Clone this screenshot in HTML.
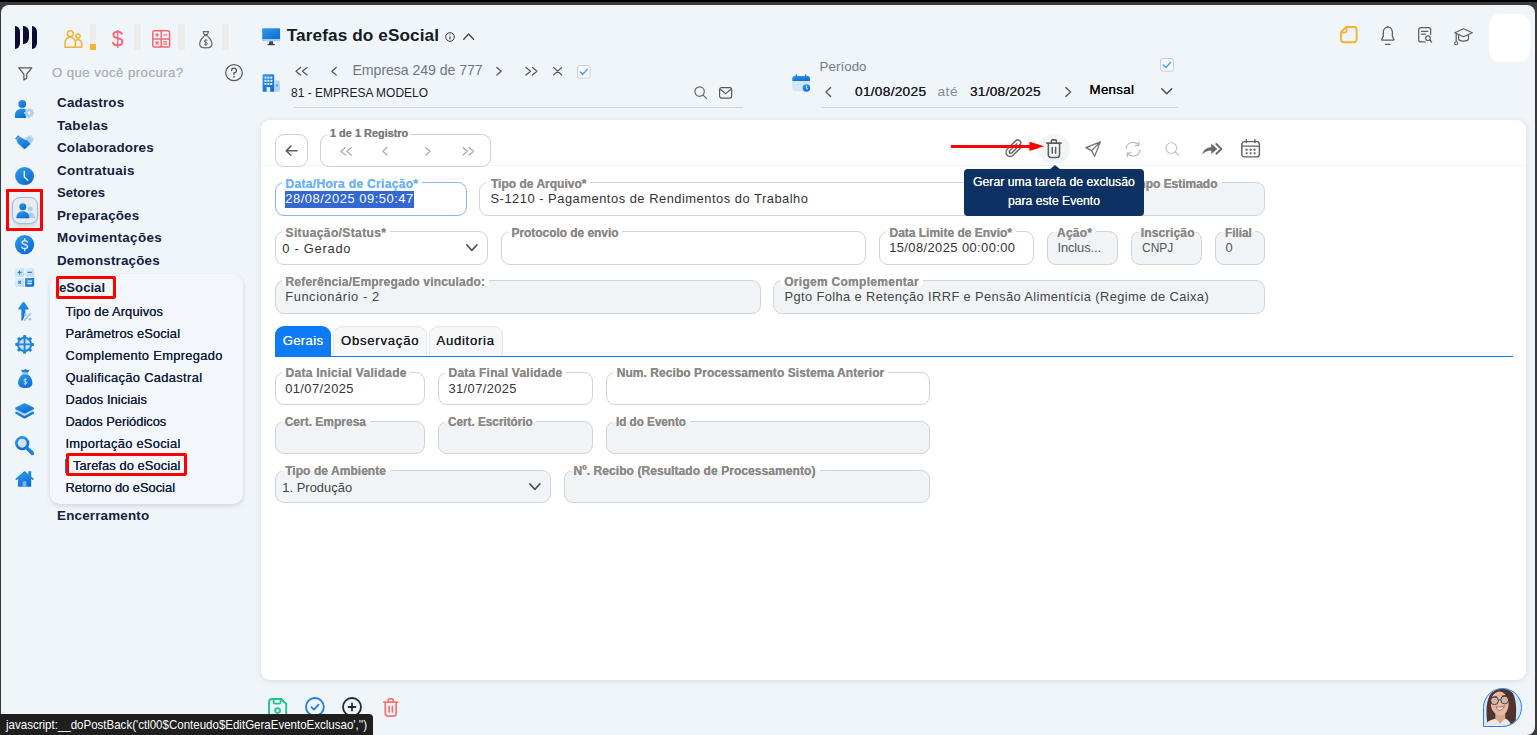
<!DOCTYPE html>
<html lang="pt-BR"><head><meta charset="utf-8"><title>Tarefas do eSocial</title>
<style>
html,body{margin:0;padding:0}
body{width:1537px;height:735px;overflow:hidden;position:relative;background:#3a3a3a;font-family:"Liberation Sans",sans-serif}
.t{position:absolute;white-space:pre;line-height:1}
.ic{position:absolute;display:block}
.ic>svg{display:block;width:100%;height:100%;overflow:visible}
</style></head>
<body>
<svg width="0" height="0" style="position:absolute"><defs><linearGradient id="bg" x1="0" y1="0" x2="0.6" y2="1"><stop offset="0" stop-color="#2d9ce9"/><stop offset="1" stop-color="#0e6dd6"/></linearGradient></defs></svg>
<div style="position:absolute;left:0.00px;top:0.00px;width:1537.00px;height:735.00px;background:#3a3a3a;"></div>
<div style="position:absolute;left:0.00px;top:0.00px;width:1537.00px;height:2.00px;background:#000;"></div>
<div style="position:absolute;left:1.00px;top:5.00px;width:1534.00px;height:730.00px;background:#f0f5fa;border-radius:8px;"></div>
<div style="position:absolute;left:14.90px;top:25.80px;width:5.20px;height:23.10px;background:#0b0a33;border-radius:0 5.2px 5.2px 0 / 0 6px 6px 0;"></div>
<div style="position:absolute;left:23.00px;top:25.80px;width:5.50px;height:17.95px;background:#0b0a33;border-radius:0 5.5px 5.5px 0 / 0 6px 6px 0;"></div>
<div style="position:absolute;left:32.00px;top:25.80px;width:5.00px;height:23.10px;background:#0b0a33;border-radius:0 5px 5px 0 / 0 6px 6px 0;"></div>
<div class="ic" style="left:64.20px;top:29.90px;width:18.60px;height:18.00px;"><svg viewBox="0 0 18.6 18" preserveAspectRatio="none" ><g fill="none" stroke="#fbb130" stroke-width="1.5" stroke-linejoin="round"><circle cx="6.3" cy="3.7" r="2.9"/><path d="M1 17.2 V12.5 A5.2 5.2 0 0 1 11.4 12.5 V17.2 Z"/><circle cx="14" cy="6" r="2.1"/><path d="M11.4 17.2 H17.8 V13.3 A3.7 3.7 0 0 0 11.4 11"/></g></svg></div>
<div style="position:absolute;left:90.10px;top:23.90px;width:6.20px;height:26.10px;background:#ececec;"></div>
<div style="position:absolute;left:90.10px;top:44.00px;width:6.20px;height:6.00px;background:#fbb130;"></div>
<span class="t" style="left:111.70px;top:29px;font-size:21.3px;font-weight:400;color:#fa6373;letter-spacing:0.000px;">$</span>
<div style="position:absolute;left:133.90px;top:23.90px;width:6.90px;height:26.60px;background:#ececec;"></div>
<div class="ic" style="left:152.20px;top:30.00px;width:18.40px;height:17.90px;"><svg viewBox="0 0 18.4 18" preserveAspectRatio="none" ><g fill="none" stroke="#fb6373" stroke-width="1.5"><rect x="0.8" y="0.8" width="16.8" height="16.4" rx="1.6"/><path d="M9.2 0.8 V17.2 M0.8 9 H17.6"/><path d="M3.2 5 H7 M5.1 3.1 V6.9 M11.3 5 H15.1 M3.6 11.6 L6.6 14.6 M6.6 11.6 L3.6 14.6 M11.3 12 H15.1 M11.3 14.3 H15.1" stroke-width="1.2"/></g></svg></div>
<div style="position:absolute;left:178.00px;top:23.90px;width:7.00px;height:26.60px;background:#ececec;"></div>
<div class="ic" style="left:198.90px;top:30.90px;width:13.60px;height:17.50px;"><svg viewBox="0 0 14 17.5" preserveAspectRatio="none" ><g fill="none" stroke="#666" stroke-width="1.25" stroke-linejoin="round"><path d="M4.3 0.7 H9.7 L8.6 3.6 H5.4 Z"/><path d="M5.3 4.6 H8.7"/><path d="M5.2 5.2 C2.5 7.5 0.7 10.5 0.7 13.2 C0.7 15.8 3 16.8 7 16.8 C11 16.8 13.3 15.8 13.3 13.2 C13.3 10.5 11.5 7.5 8.8 5.2"/><path d="M8.6 9.6 C8 8.7 5.5 8.8 5.5 10.2 C5.5 11.8 8.6 11 8.6 12.7 C8.6 14.1 6 14.2 5.4 13.2 M7 7.9 V15" stroke-width="1"/></g></svg></div>
<div style="position:absolute;left:222.00px;top:23.90px;width:7.00px;height:26.60px;background:#ececec;"></div>
<div class="ic" style="left:17.60px;top:66.80px;width:14.60px;height:13.70px;"><svg viewBox="0 0 14.6 13.7" preserveAspectRatio="none" ><path d="M0.8 0.8 H13.8 L8.7 7.2 V11.3 L5.9 12.9 V7.2 Z" fill="none" stroke="#555" stroke-width="1.2" stroke-linejoin="round"/></svg></div>
<span class="t" style="left:51.90px;top:66px;font-size:13.2px;font-weight:400;color:#b0b3b7;letter-spacing:0.452px;text-shadow:0 0 .3px #b0b3b7;">O que você procura?</span>
<div class="ic" style="left:225.00px;top:64.20px;width:18.00px;height:17.30px;"><svg viewBox="0 0 18 17.3" preserveAspectRatio="none" ><ellipse cx="9" cy="8.65" rx="8.3" ry="8" fill="none" stroke="#555" stroke-width="1.2"/><path d="M6.6 6.6 A2.4 2.4 0 1 1 9 9 V10.3" fill="none" stroke="#555" stroke-width="1.3" stroke-linecap="round"/><circle cx="9" cy="12.7" r="0.85" fill="#555"/></svg></div>
<div class="ic" style="left:15.00px;top:100.00px;width:19.20px;height:18.00px;"><svg viewBox="0 0 19.4 18" preserveAspectRatio="none" ><circle cx="7.3" cy="3.9" r="3.9" fill="url(#bg)"/><path d="M0 17.9 V15 C0 11 2.6 8.7 7.3 8.7 C9.6 8.7 11.4 9.3 12.4 10.4 L11 17.9 Z" fill="url(#bg)"/><g fill="#b3d1ee"><circle cx="14.3" cy="12.9" r="3.9"/><path d="M13.3 7.9 h2 v10 h-2z M9.3 11.9 h10 v2 h-10z M10.1 10.1 l1.4 -1.4 7 7 -1.4 1.4z M17.1 8.7 l1.4 1.4 -7 7 -1.4 -1.4z"/></g><circle cx="14.3" cy="12.9" r="1.4" fill="#f4f8fc"/></svg></div>
<div class="ic" style="left:15.00px;top:135.00px;width:19.20px;height:14.50px;"><svg viewBox="0 0 19.4 14.7" preserveAspectRatio="none" ><path d="M19.4 3.7 L15.7 0.2 L12 2.4 L7.5 3.3 L9 6 L15.2 9.6 L17.6 6.6 Z" fill="#a9cbea"/><path d="M19.4 3.7 L15.9 0.2 L14.7 1.5 L18.1 5 Z" fill="#c9dff3"/><path d="M1.8 8.2 L8.8 14.6 L10.4 13.6 L3.4 7 Z" fill="#9cc4ea" opacity=".75"/><path d="M1.6 5.2 L5 1.9 L7.5 3.3 L11.6 4.9 L15.7 9 L9.8 14.4 L4.4 9.4 L2.8 8 Z" fill="url(#bg)"/><path d="M0 3.7 L3.4 0.2 L4.7 1.6 L1.4 4.9 Z" fill="#1f7fdc"/><path d="M7.4 3.4 L10.2 2.6 L12.6 4.2 L10.8 5 Z" fill="#cfe2f5"/></svg></div>
<div class="ic" style="left:15.00px;top:167.00px;width:19.20px;height:18.20px;"><svg viewBox="0 0 19.2 18.2" preserveAspectRatio="none" ><ellipse cx="9.6" cy="9.1" rx="9.5" ry="9" fill="url(#bg)"/><path d="M9.3 4.4 V10 L12.8 13.3" fill="none" stroke="#e9f2fb" stroke-width="1.4" stroke-linecap="round" stroke-linejoin="round"/></svg></div>
<div style="position:absolute;left:6.00px;top:189.00px;width:37.00px;height:42.00px;box-sizing:border-box;border:3px solid #ff0000;border-radius:1px;"></div>
<div style="position:absolute;left:12.00px;top:197.00px;width:26.00px;height:27.00px;box-sizing:border-box;border:1px solid #8fc0f0;border-radius:8px;background:#e9ebee;box-shadow:0 2px 4px rgba(0,0,0,.18);"></div>
<div class="ic" style="left:15.80px;top:202.50px;width:19.20px;height:15.50px;"><svg viewBox="0 0 19.2 15.5" preserveAspectRatio="none" ><circle cx="14.4" cy="5.8" r="2.5" fill="#a9cdf0"/><path d="M10.8 15 C10.8 11.5 12 9.4 14.4 9.4 C17.4 9.4 19 11.8 19 15 Z" fill="#a9cdf0"/><circle cx="6.8" cy="3.7" r="3.5" fill="url(#bg)"/><path d="M0.3 15.3 C0.3 10.6 2.8 8.3 6.8 8.3 C10.8 8.3 13.3 10.6 13.3 15.3 Z" fill="url(#bg)"/></svg></div>
<div class="ic" style="left:15.00px;top:235.00px;width:19.20px;height:19.20px;"><svg viewBox="0 0 19.2 19.2" preserveAspectRatio="none" ><circle cx="9.6" cy="9.6" r="9.6" fill="url(#bg)"/><path d="M12.4 7 C11.9 5.4 7.1 5.1 7.1 7.6 C7.1 10 12.6 9.1 12.6 11.8 C12.6 14.2 7.5 14 6.8 12.2 M9.7 3.6 V5.4 M9.7 13.8 V15.7" fill="none" stroke="#d9e9f8" stroke-width="1.4" stroke-linecap="round"/></svg></div>
<div class="ic" style="left:15.00px;top:268.30px;width:19.20px;height:18.70px;"><svg viewBox="0 0 19.2 18.7" preserveAspectRatio="none" ><defs><linearGradient id="lt" x1="0" y1="0" x2="1" y2="1"><stop offset="0" stop-color="#e6f0fa"/><stop offset="1" stop-color="#b9d6f1"/></linearGradient></defs><path d="M1.6 0 H9.1 V8.8 H0 V1.6 Q0 0 1.6 0 Z" fill="url(#lt)"/><path d="M10.1 0 H17.6 Q19.2 0 19.2 1.6 V8.8 H10.1 Z" fill="url(#lt)"/><path d="M0 9.9 H9.1 V18.7 H1.6 Q0 18.7 0 17.1 Z" fill="url(#lt)"/><path d="M10.1 9.9 H19.2 V17.1 Q19.2 18.7 17.6 18.7 H10.1 Z" fill="url(#bg)"/><path d="M2.6 4.4 H6.6 M4.6 2.4 V6.4 M12.6 4.4 H16.8 M3.3 12.9 L5.9 15.6 M5.9 12.9 L3.3 15.6" stroke="#1f86e0" stroke-width="1.2" fill="none"/><path d="M12.4 13.1 H17 M12.4 15.5 H17" stroke="#e6f0fa" stroke-width="1.3" fill="none"/></svg></div>
<div class="ic" style="left:17.50px;top:302.00px;width:13.30px;height:18.80px;"><svg viewBox="0 0 13.3 18.8" preserveAspectRatio="none" ><path d="M5.4 0 Q6 -0.2 6.6 0.4 L10.6 6.6 Q10.9 7.6 10 7.6 H7.4 V12 L4.6 18.4 H3.4 V7.6 H0.9 Q0 7.6 0.3 6.6 L4.4 0.4 Q4.9 -0.2 5.4 0 Z" fill="url(#bg)"/><path d="M12.6 11.6 L6.6 18.2" stroke="#8fbfea" stroke-width="1.5" fill="none" stroke-linecap="round"/><circle cx="7.3" cy="12.4" r="1.3" fill="#8fbfea"/><circle cx="11.9" cy="17.2" r="1.3" fill="#8fbfea"/></svg></div>
<div class="ic" style="left:15.00px;top:335.00px;width:19.20px;height:18.80px;"><svg viewBox="0 0 19.2 18.8" preserveAspectRatio="none" ><g fill="url(#bg)"><rect x="8.1" y="0" width="3" height="3.4" rx="0.7" transform="rotate(0 9.6 9.4)"/><rect x="8.1" y="0" width="3" height="3.4" rx="0.7" transform="rotate(45 9.6 9.4)"/><rect x="8.1" y="0" width="3" height="3.4" rx="0.7" transform="rotate(90 9.6 9.4)"/><rect x="8.1" y="0" width="3" height="3.4" rx="0.7" transform="rotate(135 9.6 9.4)"/><rect x="8.1" y="0" width="3" height="3.4" rx="0.7" transform="rotate(180 9.6 9.4)"/><rect x="8.1" y="0" width="3" height="3.4" rx="0.7" transform="rotate(225 9.6 9.4)"/><rect x="8.1" y="0" width="3" height="3.4" rx="0.7" transform="rotate(270 9.6 9.4)"/><rect x="8.1" y="0" width="3" height="3.4" rx="0.7" transform="rotate(315 9.6 9.4)"/></g><circle cx="9.6" cy="9.4" r="6.6" fill="#cfe2f5" stroke="#1f86e0" stroke-width="2.1"/><path d="M9.6 3.4 V15.4 M3.6 9.4 H15.6" stroke="#1f86e0" stroke-width="1.9" fill="none"/></svg></div>
<div class="ic" style="left:17.50px;top:368.80px;width:14.50px;height:19.20px;"><svg viewBox="0 0 14.5 19.2" preserveAspectRatio="none" ><path d="M2.6 0.2 L4.6 1.3 L7.2 0.1 L9.9 1.3 L11.9 0.2 L10 3.6 H4.5 Z" fill="url(#bg)"/><path d="M4.4 3.8 H10.1 V5.6 H4.4 Z" fill="#9cc5ec"/><path d="M4.4 5.6 H10.1 C12.8 7.8 14.4 10.9 14.4 14 C14.4 17.4 11.6 19.1 7.25 19.1 C2.9 19.1 0.1 17.4 0.1 14 C0.1 10.9 1.7 7.8 4.4 5.6 Z" fill="url(#bg)"/><path d="M8.8 10.8 C8.3 9.9 5.9 10 5.9 11.4 C5.9 12.9 8.9 12.2 8.9 13.8 C8.9 15.2 6.3 15.3 5.7 14.3 M7.3 9.2 V16.3" fill="none" stroke="#cfe3f6" stroke-width="0.9"/></svg></div>
<div class="ic" style="left:15.00px;top:403.30px;width:19.20px;height:15.90px;"><svg viewBox="0 0 19.2 16" preserveAspectRatio="none" ><path d="M0.4 9 L9.6 5 L18.8 9 Q19.6 10.2 18.6 10.9 L10.6 15.4 Q9.6 15.9 8.6 15.4 L0.6 10.9 Q-0.4 10.2 0.4 9 Z" fill="url(#bg)"/><path d="M0.4 6.6 L9.6 3 L18.8 6.6 Q19.4 7.6 18.6 8.1 L10.6 12.5 Q9.6 13 8.6 12.5 L0.6 8.1 Q-0.2 7.6 0.4 6.6 Z" fill="#c6dcf3"/><path d="M8.6 0.4 Q9.6 -0.1 10.6 0.4 L18.6 4.6 Q19.8 5.4 18.6 6.2 L10.6 10.4 Q9.6 10.9 8.6 10.4 L0.6 6.2 Q-0.6 5.4 0.6 4.6 Z" fill="url(#bg)"/></svg></div>
<div class="ic" style="left:15.00px;top:435.80px;width:19.20px;height:19.20px;"><svg viewBox="0 0 19.2 19.2" preserveAspectRatio="none" ><circle cx="7.2" cy="7.2" r="5.8" fill="#cfe2f5" stroke="url(#bg)" stroke-width="2.7"/><path d="M12.2 12.2 L17.4 17.4" stroke="#1a80e0" stroke-width="3.6" stroke-linecap="round" fill="none"/><path d="M3.9 7.6 A3.4 3.4 0 0 1 5.6 4.4" stroke="#fff" stroke-width="1" fill="none" stroke-linecap="round"/></svg></div>
<div class="ic" style="left:15.00px;top:470.80px;width:19.20px;height:15.90px;"><svg viewBox="0 0 19.2 16" preserveAspectRatio="none" ><rect x="13.4" y="0.2" width="2.8" height="6" fill="#1f86e0"/><path d="M3 7.6 L9.6 2 L16.2 7.6 V15.9 H3 Z" fill="url(#bg)"/><path d="M0.2 8 L9.6 0.1 L19 8 L17.8 9.4 L9.6 2.6 L1.4 9.4 Z" fill="#1f86e0"/><path d="M7.6 15.9 V11.6 Q7.6 10.4 8.8 10.4 H10.2 Q11.4 10.4 11.4 11.6 V15.9 Z" fill="#7db6ea"/></svg></div>
<span class="t" style="left:57.00px;top:96px;font-size:13.4px;font-weight:700;color:#14213d;letter-spacing:0.213px;">Cadastros</span>
<span class="t" style="left:57.00px;top:119px;font-size:13.4px;font-weight:700;color:#14213d;letter-spacing:0.354px;">Tabelas</span>
<span class="t" style="left:57.00px;top:141px;font-size:13.4px;font-weight:700;color:#14213d;letter-spacing:0.183px;">Colaboradores</span>
<span class="t" style="left:57.00px;top:164px;font-size:13.4px;font-weight:700;color:#14213d;letter-spacing:0.309px;">Contratuais</span>
<span class="t" style="left:57.00px;top:186px;font-size:13.4px;font-weight:700;color:#14213d;letter-spacing:0.000px;transform:scaleX(0.9771);transform-origin:0 0;">Setores</span>
<span class="t" style="left:57.00px;top:209px;font-size:13.4px;font-weight:700;color:#14213d;letter-spacing:0.179px;">Preparações</span>
<span class="t" style="left:57.00px;top:231px;font-size:13.4px;font-weight:700;color:#14213d;letter-spacing:0.353px;">Movimentações</span>
<span class="t" style="left:57.00px;top:254px;font-size:13.4px;font-weight:700;color:#14213d;letter-spacing:0.185px;">Demonstrações</span>
<div style="position:absolute;left:50.00px;top:274.20px;width:193.30px;height:229.50px;background:#f3f7fb;border-radius:10px;box-shadow:0 2px 5px rgba(0,0,0,.13);"></div>
<div style="position:absolute;left:56.20px;top:276.20px;width:60.00px;height:22.60px;box-sizing:border-box;border:3px solid #ff0000;border-radius:2px;"></div>
<span class="t" style="left:59.20px;top:281px;font-size:13.4px;font-weight:700;color:#14213d;letter-spacing:0.000px;transform:scaleX(0.9828);transform-origin:0 0;">eSocial</span>
<span class="t" style="left:65.50px;top:306px;font-size:12.9px;font-weight:400;color:#14213d;letter-spacing:0.130px;text-shadow:0 0 .4px #14213d;">Tipo de Arquivos</span>
<span class="t" style="left:65.50px;top:328px;font-size:12.9px;font-weight:400;color:#14213d;letter-spacing:0.118px;text-shadow:0 0 .4px #14213d;">Parâmetros eSocial</span>
<span class="t" style="left:65.50px;top:350px;font-size:12.9px;font-weight:400;color:#14213d;letter-spacing:0.326px;text-shadow:0 0 .4px #14213d;">Complemento Empregado</span>
<span class="t" style="left:65.50px;top:372px;font-size:12.9px;font-weight:400;color:#14213d;letter-spacing:0.324px;text-shadow:0 0 .4px #14213d;">Qualificação Cadastral</span>
<span class="t" style="left:65.50px;top:394px;font-size:12.9px;font-weight:400;color:#14213d;letter-spacing:0.096px;text-shadow:0 0 .4px #14213d;">Dados Iniciais</span>
<span class="t" style="left:65.50px;top:416px;font-size:12.9px;font-weight:400;color:#14213d;letter-spacing:-0.015px;text-shadow:0 0 .4px #14213d;">Dados Periódicos</span>
<span class="t" style="left:65.50px;top:438px;font-size:12.9px;font-weight:400;color:#14213d;letter-spacing:0.261px;text-shadow:0 0 .4px #14213d;">Importação eSocial</span>
<span class="t" style="left:73.00px;top:460px;font-size:12.9px;font-weight:400;color:#14213d;letter-spacing:0.073px;text-shadow:0 0 .4px #14213d;">Tarefas do eSocial</span>
<span class="t" style="left:65.50px;top:482px;font-size:12.9px;font-weight:400;color:#14213d;letter-spacing:-0.008px;text-shadow:0 0 .4px #14213d;">Retorno do eSocial</span>
<div style="position:absolute;left:64.50px;top:459.00px;width:2.50px;height:14.00px;background:#1a73e8;"></div>
<div style="position:absolute;left:66.20px;top:453.00px;width:120.80px;height:23.20px;box-sizing:border-box;border:3px solid #ff0000;border-radius:2px;"></div>
<span class="t" style="left:57.00px;top:509px;font-size:13.4px;font-weight:700;color:#14213d;letter-spacing:0.196px;">Encerramento</span>
<div class="ic" style="left:262.00px;top:28.30px;width:18.30px;height:17.70px;"><svg viewBox="0 0 18.3 17.7" preserveAspectRatio="none" ><rect x="0.2" y="0.2" width="17.9" height="12.8" rx="1" fill="url(#bg)"/><rect x="0.2" y="11" width="17.9" height="2.2" fill="#a9cdf0"/><path d="M7.4 13.2 H10.9 L11.4 16 H6.9 Z" fill="#3a4657"/><rect x="5.4" y="16" width="7.5" height="1.2" rx="0.5" fill="#3a4657"/></svg></div>
<span class="t" style="left:286.80px;top:27px;font-size:17.2px;font-weight:700;color:#151a24;letter-spacing:0.094px;">Tarefas do eSocial</span>
<div class="ic" style="left:444.70px;top:31.50px;width:10.00px;height:10.00px;"><svg viewBox="0 0 10 10" preserveAspectRatio="none" ><circle cx="5" cy="5" r="4.3" fill="none" stroke="#222" stroke-width="0.9"/><path d="M5 4.4 V7.3 M5 2.6 V3.3" stroke="#222" stroke-width="1" fill="none"/></svg></div>
<div class="ic" style="left:462.70px;top:32.70px;width:11.30px;height:7.00px;"><svg viewBox="0 0 12 7" preserveAspectRatio="none" ><path d="M0.8 6.2 L6 1 L11.2 6.2" fill="none" stroke="#444" stroke-width="1.5" stroke-linecap="round" stroke-linejoin="round"/></svg></div>
<div class="ic" style="left:262.00px;top:74.00px;width:18.30px;height:18.00px;"><svg viewBox="0 0 18.3 18" preserveAspectRatio="none" ><path d="M0.6 1.6 Q0.6 0.3 1.9 0.3 H10.9 Q12.2 0.3 12.2 1.6 V17.8 H0.6 Z" fill="url(#bg)"/><path d="M12.2 6.4 H16.6 Q17.9 6.4 17.9 7.7 V16.5 Q17.9 17.8 16.6 17.8 H12.2 Z" fill="#b4d3f1"/><g fill="#eaf3fc"><rect x="2.5" y="2.6" width="2" height="2"/><rect x="5.4" y="2.6" width="2" height="2"/><rect x="8.3" y="2.6" width="2" height="2"/><rect x="2.5" y="5.8" width="2" height="2"/><rect x="5.4" y="5.8" width="2" height="2"/><rect x="8.3" y="5.8" width="2" height="2"/><rect x="2.5" y="9" width="2" height="2"/><rect x="5.4" y="9" width="2" height="2"/><rect x="8.3" y="9" width="2" height="2"/><rect x="4.6" y="13" width="3.6" height="4.8"/></g><rect x="14.4" y="10.6" width="1.4" height="2" fill="#1f86e0"/></svg></div>
<div class="ic" style="left:294.70px;top:67.00px;width:13.00px;height:8.50px;color:#555;"><svg viewBox="0 0 13 8.5" preserveAspectRatio="none" ><path d="M5.6 0.5 L1 4.25 L5.6 8 M12 0.5 L7.4 4.25 L12 8" fill="none" stroke="currentColor" stroke-width="1.2" stroke-linecap="round" stroke-linejoin="round"/></svg></div>
<div class="ic" style="left:330.50px;top:67.00px;width:6.00px;height:8.50px;color:#555;"><svg viewBox="0 0 6 8.5" preserveAspectRatio="none" ><path d="M5.2 0.5 L0.8 4.25 L5.2 8" fill="none" stroke="currentColor" stroke-width="1.2" stroke-linecap="round" stroke-linejoin="round"/></svg></div>
<span class="t" style="left:352.50px;top:63px;font-size:14.2px;font-weight:400;color:#707782;letter-spacing:-0.090px;">Empresa 249 de 777</span>
<div class="ic" style="left:496.00px;top:67.00px;width:6.00px;height:8.50px;color:#555;"><svg viewBox="0 0 6 8.5" preserveAspectRatio="none" ><path d="M0.8 0.5 L5.2 4.25 L0.8 8" fill="none" stroke="currentColor" stroke-width="1.2" stroke-linecap="round" stroke-linejoin="round"/></svg></div>
<div class="ic" style="left:525.00px;top:67.00px;width:13.00px;height:8.50px;color:#555;"><svg viewBox="0 0 13 8.5" preserveAspectRatio="none" ><path d="M1 0.5 L5.6 4.25 L1 8 M7.4 0.5 L12 4.25 L7.4 8" fill="none" stroke="currentColor" stroke-width="1.2" stroke-linecap="round" stroke-linejoin="round"/></svg></div>
<div class="ic" style="left:552.70px;top:67.00px;width:9.30px;height:8.50px;color:#555;"><svg viewBox="0 0 9 9" preserveAspectRatio="none" ><path d="M0.7 0.7 L8.3 8.3 M8.3 0.7 L0.7 8.3" fill="none" stroke="currentColor" stroke-width="1.3" stroke-linecap="round"/></svg></div>
<div class="ic" style="left:576.70px;top:65.00px;width:13.50px;height:13.70px;"><svg viewBox="0 0 14 14" preserveAspectRatio="none" ><rect x="0.5" y="0.5" width="13" height="13" rx="2.2" fill="#f5f8fc" stroke="#c9ced6" stroke-width="1"/><path d="M3.4 7.2 L6 9.7 L10.7 4.4" fill="none" stroke="#56a3ee" stroke-width="1.6" stroke-linecap="round" stroke-linejoin="round"/></svg></div>
<span class="t" style="left:291.00px;top:86px;font-size:13.3px;font-weight:400;color:#1d2026;letter-spacing:0.000px;transform:scaleX(0.8999);transform-origin:0 0;">81 - EMPRESA MODELO</span>
<div class="ic" style="left:693.70px;top:85.70px;width:13.30px;height:13.30px;color:#666;"><svg viewBox="0 0 13.3 13.3" preserveAspectRatio="none" ><circle cx="5.6" cy="5.6" r="4.7" fill="none" stroke="currentColor" stroke-width="1.2"/><path d="M9.1 9.1 L12.6 12.6" stroke="currentColor" stroke-width="1.3" stroke-linecap="round" fill="none"/></svg></div>
<div class="ic" style="left:718.70px;top:86.50px;width:13.30px;height:11.70px;color:#555;"><svg viewBox="0 0 13.3 11.7" preserveAspectRatio="none" ><rect x="0.6" y="0.6" width="12.1" height="10.5" rx="2" fill="none" stroke="currentColor" stroke-width="1.15"/><path d="M1.2 2.2 L6.65 6.6 L12.1 2.2" fill="none" stroke="currentColor" stroke-width="1.15" stroke-linejoin="round"/></svg></div>
<div style="position:absolute;left:293.50px;top:106.80px;width:449.00px;height:1.00px;background:#cfd4da;"></div>
<div class="ic" style="left:791.70px;top:74.00px;width:18.30px;height:18.00px;"><svg viewBox="0 0 18.3 18" preserveAspectRatio="none" ><rect x="0.3" y="2" width="17.6" height="15" rx="2.4" fill="#d3e5f7"/><path d="M0.3 7 V4.4 Q0.3 2 2.7 2 H15.5 Q17.9 2 17.9 4.4 V7 Z" fill="url(#bg)"/><rect x="3.6" y="0.2" width="1.5" height="3.4" rx="0.7" fill="#1f86e0"/><rect x="13" y="0.2" width="1.5" height="3.4" rx="0.7" fill="#1f86e0"/><circle cx="14.4" cy="14" r="3.8" fill="url(#bg)"/><path d="M14.4 12 V14.2 L15.7 15" stroke="#fff" stroke-width="0.9" fill="none" stroke-linecap="round"/></svg></div>
<span class="t" style="left:819.50px;top:60px;font-size:13.3px;font-weight:400;color:#777b82;letter-spacing:0.070px;">Período</span>
<div class="ic" style="left:824.50px;top:87.00px;width:6.50px;height:10.00px;color:#5a5a5a;"><svg viewBox="0 0 6 8.5" preserveAspectRatio="none" ><path d="M5.2 0.5 L0.8 4.25 L5.2 8" fill="none" stroke="currentColor" stroke-width="1.2" stroke-linecap="round" stroke-linejoin="round"/></svg></div>
<span class="t" style="left:855.00px;top:85px;font-size:13.7px;font-weight:400;color:#1d2026;letter-spacing:0.276px;text-shadow:0 0 .25px #1d2026;">01/08/2025</span>
<span class="t" style="left:937.50px;top:85px;font-size:13.7px;font-weight:400;color:#858a91;letter-spacing:0.484px;">até</span>
<span class="t" style="left:970.00px;top:85px;font-size:13.7px;font-weight:400;color:#1d2026;letter-spacing:0.243px;text-shadow:0 0 .25px #1d2026;">31/08/2025</span>
<div class="ic" style="left:1064.50px;top:87.00px;width:6.50px;height:10.00px;color:#5a5a5a;"><svg viewBox="0 0 6 8.5" preserveAspectRatio="none" ><path d="M0.8 0.5 L5.2 4.25 L0.8 8" fill="none" stroke="currentColor" stroke-width="1.2" stroke-linecap="round" stroke-linejoin="round"/></svg></div>
<span class="t" style="left:1089.50px;top:83px;font-size:13.3px;font-weight:400;color:#000;letter-spacing:0.325px;text-shadow:0 0 .35px #000;">Mensal</span>
<div class="ic" style="left:1160.50px;top:87.50px;width:11.50px;height:6.70px;"><svg viewBox="0 0 12 7" preserveAspectRatio="none" ><path d="M0.8 0.8 L6 6 L11.2 0.8" fill="none" stroke="#4a4a4a" stroke-width="1.5" stroke-linecap="round" stroke-linejoin="round"/></svg></div>
<div class="ic" style="left:1159.70px;top:58.00px;width:14.00px;height:13.70px;"><svg viewBox="0 0 14 14" preserveAspectRatio="none" ><rect x="0.5" y="0.5" width="13" height="13" rx="2.2" fill="#f5f8fc" stroke="#c9ced6" stroke-width="1"/><path d="M3.4 7.2 L6 9.7 L10.7 4.4" fill="none" stroke="#56a3ee" stroke-width="1.6" stroke-linecap="round" stroke-linejoin="round"/></svg></div>
<div style="position:absolute;left:820.70px;top:106.80px;width:357.30px;height:1.00px;background:#cfd4da;"></div>
<div class="ic" style="left:1340.30px;top:26.20px;width:17.60px;height:17.30px;"><svg viewBox="0 0 17.6 17.3" preserveAspectRatio="none" ><path d="M6.2 1 H13.6 Q16.6 1 16.6 4 V13.3 Q16.6 16.3 13.6 16.3 H4 Q1 16.3 1 13.3 V6.2 Z" fill="none" stroke="#fbb130" stroke-width="1.9" stroke-linejoin="round"/><path d="M6.6 1.2 V4.4 Q6.6 6.6 4.4 6.6 H1.2" fill="none" stroke="#fbb130" stroke-width="1.7"/></svg></div>
<div class="ic" style="left:1380.60px;top:25.60px;width:13.70px;height:19.40px;"><svg viewBox="0 0 13.7 19.4" preserveAspectRatio="none" ><path d="M6.85 1.2 C3.8 1.2 2.3 3.6 2.3 6.6 V10.2 L0.8 13.4 Q0.6 14.2 1.5 14.2 H12.2 Q13.1 14.2 12.9 13.4 L11.4 10.2 V6.6 C11.4 3.6 9.9 1.2 6.85 1.2 Z" fill="none" stroke="#5e5e5e" stroke-width="1.3" stroke-linejoin="round"/><path d="M6.85 0.3 V1.2 M4.6 18.3 H9.1" stroke="#5e5e5e" stroke-width="1.3" stroke-linecap="round" fill="none"/></svg></div>
<div class="ic" style="left:1417.60px;top:27.00px;width:14.40px;height:16.20px;"><svg viewBox="0 0 14.4 16.2" preserveAspectRatio="none" ><path d="M7.2 15 H3 Q0.7 15 0.7 12.7 V3 Q0.7 0.7 3 0.7 H10.4 Q12.7 0.7 12.7 3 V7.4" fill="none" stroke="#5e5e5e" stroke-width="1.25" stroke-linecap="round"/><path d="M3.6 4.4 H9.8 M3.6 7.2 H7.4" stroke="#5e5e5e" stroke-width="1.2" stroke-linecap="round" fill="none"/><circle cx="10" cy="11.2" r="2.3" fill="none" stroke="#5e5e5e" stroke-width="1.2"/><path d="M11.8 13 L13.6 15" stroke="#5e5e5e" stroke-width="1.3" stroke-linecap="round"/></svg></div>
<div class="ic" style="left:1454.20px;top:27.60px;width:19.10px;height:17.40px;"><svg viewBox="0 0 19.1 17.4" preserveAspectRatio="none" ><path d="M9.55 0.7 L18.3 4.7 L9.55 8.7 L0.8 4.7 Z" fill="none" stroke="#5e5e5e" stroke-width="1.25" stroke-linejoin="round"/><path d="M4.6 6.6 V10.6 C4.6 12.2 6.8 13.2 9.55 13.2 C12.3 13.2 14.5 12.2 14.5 10.6 V6.6" fill="none" stroke="#5e5e5e" stroke-width="1.25"/><path d="M2.2 5.4 V13.6" stroke="#5e5e5e" stroke-width="1.25" fill="none"/><circle cx="2.2" cy="15.2" r="1.5" fill="none" stroke="#5e5e5e" stroke-width="1.1"/></svg></div>
<div style="position:absolute;left:1489.00px;top:13.80px;width:41.00px;height:48.20px;background:#fff;border-radius:11px;"></div>
<div style="position:absolute;left:261.00px;top:120.00px;width:1264.50px;height:560.00px;background:#fff;border-radius:9px;box-shadow:0 1px 6px rgba(0,0,0,.11);"></div>
<div style="position:absolute;left:261.00px;top:165.30px;width:1264.50px;height:1.00px;background:#f3f4f6;"></div>
<div style="position:absolute;left:275px;top:134px;width:33px;height:33px;box-sizing:border-box;border:1px solid #c9d1da;border-radius:9px;background:#fff;"></div>
<div class="ic" style="left:284.50px;top:145.20px;width:13.00px;height:11.40px;color:#5e5e5e;"><svg viewBox="0 0 14 12" preserveAspectRatio="none" ><path d="M13 6 H1.5 M6.3 1.2 L1.3 6 L6.3 10.8" fill="none" stroke="currentColor" stroke-width="1.6" stroke-linecap="round" stroke-linejoin="round"/></svg></div>
<div style="position:absolute;left:320px;top:134px;width:171px;height:33px;box-sizing:border-box;border:1px solid #cfcfcf;border-radius:9px;background:#fff;"></div>
<div style="position:absolute;left:327.00px;top:134.00px;width:83.50px;height:1.20px;background:#fff;"></div>
<span class="t" style="left:329.70px;top:127px;font-size:11.6px;font-weight:700;color:#7d7b7a;letter-spacing:0.000px;transform:scaleX(0.9420);transform-origin:0 0;text-shadow:0 0 .35px #7d7b7a;">1 de 1 Registro</span>
<div class="ic" style="left:339.70px;top:147.30px;width:12.30px;height:8.50px;color:#a9a9a9;"><svg viewBox="0 0 13 8.5" preserveAspectRatio="none" ><path d="M5.6 0.5 L1 4.25 L5.6 8 M12 0.5 L7.4 4.25 L12 8" fill="none" stroke="currentColor" stroke-width="1.2" stroke-linecap="round" stroke-linejoin="round"/></svg></div>
<div class="ic" style="left:382.30px;top:147.30px;width:5.70px;height:8.50px;color:#a9a9a9;"><svg viewBox="0 0 6 8.5" preserveAspectRatio="none" ><path d="M5.2 0.5 L0.8 4.25 L5.2 8" fill="none" stroke="currentColor" stroke-width="1.2" stroke-linecap="round" stroke-linejoin="round"/></svg></div>
<div class="ic" style="left:425.30px;top:147.30px;width:6.00px;height:8.50px;color:#a9a9a9;"><svg viewBox="0 0 6 8.5" preserveAspectRatio="none" ><path d="M0.8 0.5 L5.2 4.25 L0.8 8" fill="none" stroke="currentColor" stroke-width="1.2" stroke-linecap="round" stroke-linejoin="round"/></svg></div>
<div class="ic" style="left:461.50px;top:147.30px;width:12.50px;height:8.50px;color:#a9a9a9;"><svg viewBox="0 0 13 8.5" preserveAspectRatio="none" ><path d="M1 0.5 L5.6 4.25 L1 8 M7.4 0.5 L12 4.25 L7.4 8" fill="none" stroke="currentColor" stroke-width="1.2" stroke-linecap="round" stroke-linejoin="round"/></svg></div>
<div style="position:absolute;left:951.00px;top:144.70px;width:81.00px;height:3.20px;background:#ff0000;"></div>
<svg class="ic" style="left:1029px;top:140px;width:17px;height:13px" viewBox="0 0 17 13"><path d="M0.6 1.9 L15.2 6.3 L0.6 10.7 Z" fill="#ff0000"/></svg>
<div style="position:absolute;left:1037.80px;top:134.00px;width:32.20px;height:30.00px;background:#f2f4f5;border-radius:50%;"></div>
<div class="ic" style="left:1004.50px;top:138.70px;width:18.00px;height:18.80px;color:#6b6b6b;"><svg viewBox="0 0 18 18.8" preserveAspectRatio="none" ><path d="M16.2 8.2 L8.4 16 C6.6 17.8 3.8 17.8 2.2 16.2 C0.6 14.6 0.6 11.8 2.4 10 L10.6 1.9 C11.8 0.7 13.7 0.7 14.8 1.8 C15.9 2.9 15.9 4.8 14.7 6 L6.8 13.9 C6.2 14.5 5.3 14.5 4.7 13.9 C4.1 13.3 4.1 12.4 4.7 11.8 L11.8 4.7" fill="none" stroke="currentColor" stroke-width="1.55" stroke-linecap="round" stroke-linejoin="round"/></svg></div>
<svg class="ic" style="left:1029px;top:140px;width:17px;height:13px" viewBox="0 0 17 13"><path d="M0.6 1.9 L15.2 6.3 L0.6 10.7 Z" fill="#ff0000"/></svg>
<div style="position:absolute;left:1000.00px;top:144.70px;width:32.00px;height:3.20px;background:#ff0000;"></div>
<div class="ic" style="left:1046.00px;top:139.00px;width:15.90px;height:19.40px;color:#5c5c5c;"><svg viewBox="0 0 15.7 18.3" preserveAspectRatio="none" ><path d="M0.8 3.9 H14.9 M5.3 3.6 V2.3 Q5.3 0.8 6.8 0.8 H8.9 Q10.4 0.8 10.4 2.3 V3.6" fill="none" stroke="currentColor" stroke-width="1.5" stroke-linecap="round"/><path d="M2.3 4.2 V14.6 Q2.3 17.4 5.1 17.4 H10.6 Q13.4 17.4 13.4 14.6 V4.2" fill="none" stroke="currentColor" stroke-width="1.5"/><path d="M6.2 8 V13.4 M9.5 8 V13.4" stroke="currentColor" stroke-width="1.5" stroke-linecap="round" fill="none"/></svg></div>
<div class="ic" style="left:1085.00px;top:140.50px;width:16.20px;height:16.20px;color:#707070;"><svg viewBox="0 0 16.2 16.2" preserveAspectRatio="none" ><path d="M15.4 0.8 L0.9 6.6 L6.6 9.6 L9.6 15.3 Z M6.6 9.6 L15.4 0.8" fill="none" stroke="currentColor" stroke-width="1.25" stroke-linejoin="round" stroke-linecap="round"/></svg></div>
<div class="ic" style="left:1124.50px;top:140.50px;width:16.20px;height:16.50px;color:#bdbdbd;"><svg viewBox="0 0 16.2 16.5" preserveAspectRatio="none" ><path d="M1.2 7.4 C1.6 3.8 4.6 1.4 8.1 1.4 C10.6 1.4 12.6 2.6 13.9 4.4 M13.9 0.8 V4.6 H10.2 M15 9.1 C14.6 12.7 11.6 15.1 8.1 15.1 C5.6 15.1 3.6 13.9 2.3 12.1 M2.3 15.7 V11.9 H6" fill="none" stroke="currentColor" stroke-width="1.3" stroke-linecap="round" stroke-linejoin="round"/></svg></div>
<div class="ic" style="left:1164.50px;top:141.80px;width:14.20px;height:13.90px;color:#c2c2c2;"><svg viewBox="0 0 14.2 13.9" preserveAspectRatio="none" ><circle cx="6.3" cy="6.1" r="5.4" fill="none" stroke="currentColor" stroke-width="1.1"/><path d="M10.3 10 L13.7 13.4" stroke="currentColor" stroke-width="1.2" stroke-linecap="round" fill="none"/></svg></div>
<div class="ic" style="left:1201.60px;top:143.00px;width:20.30px;height:11.90px;color:#6a6a6a;"><svg viewBox="0 0 20.7 12" preserveAspectRatio="none" ><path d="M0.3 11.6 C1.6 7 4.6 4.6 9.4 4.4 V0.6 L15.6 6 L9.4 11 V7.6 C5.6 7.6 2.6 8.8 0.3 11.6 Z" fill="currentColor"/><path d="M14.6 1 L19.8 6 L14.6 10.8" fill="none" stroke="currentColor" stroke-width="1.9" stroke-linejoin="round" stroke-linecap="round"/></svg></div>
<div class="ic" style="left:1240.80px;top:139.00px;width:19.20px;height:18.80px;color:#616161;"><svg viewBox="0 0 19 18.5" preserveAspectRatio="none" ><rect x="0.8" y="2.6" width="17.4" height="15" rx="2.6" fill="none" stroke="currentColor" stroke-width="1.4"/><path d="M0.8 7 H18.2 M5.2 0.8 V3.6 M13.8 0.8 V3.6" stroke="currentColor" stroke-width="1.4" stroke-linecap="round" fill="none"/><g fill="currentColor"><rect x="4.6" y="9.6" width="1.9" height="1.9" rx="0.4"/><rect x="8.55" y="9.6" width="1.9" height="1.9" rx="0.4"/><rect x="12.5" y="9.6" width="1.9" height="1.9" rx="0.4"/><rect x="4.6" y="13" width="1.9" height="1.9" rx="0.4"/><rect x="8.55" y="13" width="1.9" height="1.9" rx="0.4"/><rect x="12.5" y="13" width="1.9" height="1.9" rx="0.4"/></g></svg></div>
<div style="position:absolute;left:275px;top:182px;width:192px;height:34px;box-sizing:border-box;border:1px solid #86b7fe;border-radius:9px;background:#fff;"></div>
<div style="position:absolute;left:282.00px;top:182.00px;width:140.00px;height:1.00px;background:#fff;"></div>
<span class="t" style="left:285.50px;top:178px;font-size:12px;font-weight:700;color:#6cb2f7;letter-spacing:0.323px;text-shadow:0 0 .35px #6cb2f7;">Data/Hora de Criação*</span>
<div style="position:absolute;left:284.80px;top:190.50px;width:129.10px;height:17.00px;background:#3367d1;"></div>
<span class="t" style="left:285.30px;top:193px;font-size:12.9px;font-weight:400;color:#fff;letter-spacing:0.534px;">28/08/2025 09:50:47</span>
<div style="position:absolute;left:479px;top:182px;width:621px;height:34px;box-sizing:border-box;border:1px solid #ced4da;border-radius:9px;background:#fff;"></div>
<div style="position:absolute;left:487.00px;top:182.00px;width:103.00px;height:1.00px;background:#fff;"></div>
<span class="t" style="left:491.00px;top:178px;font-size:12px;font-weight:700;color:#8b8886;letter-spacing:0.010px;text-shadow:0 0 .35px #8b8886;">Tipo de Arquivo*</span>
<span class="t" style="left:490.50px;top:193px;font-size:12.9px;font-weight:400;color:#333;letter-spacing:0.510px;">S-1210 - Pagamentos de Rendimentos do Trabalho</span>
<div style="position:absolute;left:1112px;top:182px;width:153px;height:34px;box-sizing:border-box;border:1px solid #ced4da;border-radius:9px;background:#f1f4f7;"></div>
<div style="position:absolute;left:1118.00px;top:182.00px;width:104.00px;height:1.00px;background:#fff;"></div>
<span class="t" style="left:1122.00px;top:178px;font-size:12px;font-weight:700;color:#8b8886;letter-spacing:-0.023px;text-shadow:0 0 .35px #8b8886;">Tempo Estimado</span>
<div style="position:absolute;left:275px;top:231px;width:213px;height:34px;box-sizing:border-box;border:1px solid #ced4da;border-radius:9px;background:#fff;"></div>
<div style="position:absolute;left:282.00px;top:231.00px;width:108.00px;height:1.00px;background:#fff;"></div>
<span class="t" style="left:285.50px;top:227px;font-size:12px;font-weight:700;color:#8b8886;letter-spacing:0.386px;text-shadow:0 0 .35px #8b8886;">Situação/Status*</span>
<span class="t" style="left:282.20px;top:243px;font-size:12.9px;font-weight:400;color:#333;letter-spacing:0.742px;">0 - Gerado</span>
<div class="ic" style="left:465.50px;top:244.20px;width:11.70px;height:7.40px;"><svg viewBox="0 0 12 7" preserveAspectRatio="none" ><path d="M0.8 0.8 L6 6 L11.2 0.8" fill="none" stroke="#4a4a4a" stroke-width="1.5" stroke-linecap="round" stroke-linejoin="round"/></svg></div>
<div style="position:absolute;left:501px;top:231px;width:365px;height:34px;box-sizing:border-box;border:1px solid #ced4da;border-radius:9px;background:#fff;"></div>
<div style="position:absolute;left:508.00px;top:231.00px;width:114.00px;height:1.00px;background:#fff;"></div>
<span class="t" style="left:511.50px;top:227px;font-size:12px;font-weight:700;color:#8b8886;letter-spacing:-0.060px;text-shadow:0 0 .35px #8b8886;">Protocolo de envio</span>
<div style="position:absolute;left:879px;top:231px;width:155px;height:34px;box-sizing:border-box;border:1px solid #ced4da;border-radius:9px;background:#fff;"></div>
<div style="position:absolute;left:886.00px;top:231.00px;width:130.00px;height:1.00px;background:#fff;"></div>
<span class="t" style="left:889.50px;top:227px;font-size:12px;font-weight:700;color:#8b8886;letter-spacing:-0.010px;text-shadow:0 0 .35px #8b8886;">Data Limite de Envio*</span>
<span class="t" style="left:889.20px;top:242px;font-size:12.9px;font-weight:400;color:#333;letter-spacing:0.418px;">15/08/2025 00:00:00</span>
<div style="position:absolute;left:1047px;top:231px;width:71px;height:34px;box-sizing:border-box;border:1px solid #ced4da;border-radius:9px;background:#f1f4f7;"></div>
<div style="position:absolute;left:1053.00px;top:231.00px;width:43.00px;height:1.00px;background:#fff;"></div>
<span class="t" style="left:1057.00px;top:227px;font-size:12px;font-weight:700;color:#8b8886;letter-spacing:0.246px;text-shadow:0 0 .35px #8b8886;">Ação*</span>
<span class="t" style="left:1057.50px;top:242px;font-size:12.9px;font-weight:400;color:#555;letter-spacing:-0.115px;">Inclus...</span>
<div style="position:absolute;left:1131px;top:231px;width:71px;height:34px;box-sizing:border-box;border:1px solid #ced4da;border-radius:9px;background:#f1f4f7;"></div>
<div style="position:absolute;left:1137.00px;top:231.00px;width:61.00px;height:1.00px;background:#fff;"></div>
<span class="t" style="left:1140.70px;top:227px;font-size:12px;font-weight:700;color:#8b8886;letter-spacing:0.137px;text-shadow:0 0 .35px #8b8886;">Inscrição</span>
<span class="t" style="left:1141.70px;top:242px;font-size:12.9px;font-weight:400;color:#555;letter-spacing:0.000px;transform:scaleX(0.9296);transform-origin:0 0;">CNPJ</span>
<div style="position:absolute;left:1215px;top:231px;width:50px;height:34px;box-sizing:border-box;border:1px solid #ced4da;border-radius:9px;background:#f1f4f7;"></div>
<div style="position:absolute;left:1220.00px;top:231.00px;width:35.00px;height:1.00px;background:#fff;"></div>
<span class="t" style="left:1224.50px;top:227px;font-size:12px;font-weight:700;color:#8b8886;letter-spacing:0.000px;transform:scaleX(0.9765);transform-origin:0 0;text-shadow:0 0 .35px #8b8886;">Filial</span>
<span class="t" style="left:1225.50px;top:242px;font-size:12.9px;font-weight:400;color:#555;letter-spacing:0.000px;">0</span>
<div style="position:absolute;left:275px;top:280px;width:486px;height:34px;box-sizing:border-box;border:1px solid #ced4da;border-radius:9px;background:#f1f4f7;"></div>
<div style="position:absolute;left:282.00px;top:280.00px;width:207.00px;height:1.00px;background:#fff;"></div>
<div style="position:absolute;left:282.00px;top:274.00px;width:207.00px;height:12.00px;background:#fff;border-radius:3px;"></div>
<span class="t" style="left:285.50px;top:276px;font-size:12px;font-weight:700;color:#8b8886;letter-spacing:0.181px;text-shadow:0 0 .35px #8b8886;">Referência/Empregado vinculado:</span>
<span class="t" style="left:285.20px;top:291px;font-size:12.9px;font-weight:400;color:#444;letter-spacing:0.573px;">Funcionário - 2</span>
<div style="position:absolute;left:773px;top:280px;width:492px;height:34px;box-sizing:border-box;border:1px solid #ced4da;border-radius:9px;background:#f1f4f7;"></div>
<div style="position:absolute;left:780.00px;top:280.00px;width:143.00px;height:1.00px;background:#fff;"></div>
<div style="position:absolute;left:781.00px;top:274.00px;width:142.00px;height:12.00px;background:#fff;border-radius:3px;"></div>
<span class="t" style="left:784.20px;top:276px;font-size:12px;font-weight:700;color:#8b8886;letter-spacing:0.285px;text-shadow:0 0 .35px #8b8886;">Origem Complementar</span>
<span class="t" style="left:784.50px;top:291px;font-size:12.9px;font-weight:400;color:#444;letter-spacing:0.370px;">Pgto Folha e Retenção IRRF e Pensão Alimentícia (Regime de Caixa)</span>
<div style="position:absolute;left:275.20px;top:355.60px;width:1237.80px;height:1.40px;background:#0d7bf5;"></div>
<div style="position:absolute;left:275px;top:326px;width:56px;height:31px;background:#0d7bf5;border-radius:9px 9px 0 0;"></div>
<span class="t" style="left:282.70px;top:334px;font-size:13.1px;font-weight:400;color:#fff;letter-spacing:0.344px;text-shadow:0 0 .5px #fff;">Gerais</span>
<div style="position:absolute;left:333px;top:326px;width:94px;height:29px;box-sizing:border-box;background:#f6f7f8;border:1px solid #e3e5e8;border-bottom:none;border-radius:9px 9px 0 0;"></div>
<span class="t" style="left:341.00px;top:334px;font-size:13.1px;font-weight:400;color:#1d2026;letter-spacing:0.766px;text-shadow:0 0 .25px #1d2026;">Observação</span>
<div style="position:absolute;left:429px;top:326px;width:74px;height:29px;box-sizing:border-box;background:#f6f7f8;border:1px solid #e3e5e8;border-bottom:none;border-radius:9px 9px 0 0;"></div>
<span class="t" style="left:436.50px;top:334px;font-size:13.1px;font-weight:400;color:#1d2026;letter-spacing:0.727px;text-shadow:0 0 .25px #1d2026;">Auditoria</span>
<div style="position:absolute;left:275px;top:372px;width:150px;height:33px;box-sizing:border-box;border:1px solid #ced4da;border-radius:9px;background:#fff;"></div>
<div style="position:absolute;left:282.00px;top:372.00px;width:128.00px;height:1.00px;background:#fff;"></div>
<span class="t" style="left:285.50px;top:367px;font-size:12px;font-weight:700;color:#8b8886;letter-spacing:0.280px;text-shadow:0 0 .35px #8b8886;">Data Inicial Validade</span>
<span class="t" style="left:285.20px;top:383px;font-size:12.9px;font-weight:400;color:#333;letter-spacing:0.419px;">01/07/2025</span>
<div style="position:absolute;left:438px;top:372px;width:155px;height:33px;box-sizing:border-box;border:1px solid #ced4da;border-radius:9px;background:#fff;"></div>
<div style="position:absolute;left:444.00px;top:372.00px;width:122.00px;height:1.00px;background:#fff;"></div>
<span class="t" style="left:448.50px;top:367px;font-size:12px;font-weight:700;color:#8b8886;letter-spacing:0.240px;text-shadow:0 0 .35px #8b8886;">Data Final Validade</span>
<span class="t" style="left:448.50px;top:383px;font-size:12.9px;font-weight:400;color:#333;letter-spacing:0.385px;">31/07/2025</span>
<div style="position:absolute;left:606px;top:372px;width:324px;height:33px;box-sizing:border-box;border:1px solid #ced4da;border-radius:9px;background:#fff;"></div>
<div style="position:absolute;left:613.00px;top:372.00px;width:275.00px;height:1.00px;background:#fff;"></div>
<span class="t" style="left:616.70px;top:367px;font-size:12px;font-weight:700;color:#8b8886;letter-spacing:0.062px;text-shadow:0 0 .35px #8b8886;">Num. Recibo Processamento Sistema Anterior</span>
<div style="position:absolute;left:275px;top:421px;width:150px;height:33px;box-sizing:border-box;border:1px solid #ced4da;border-radius:9px;background:#f1f4f7;"></div>
<div style="position:absolute;left:281.00px;top:421.00px;width:89.00px;height:1.00px;background:#fff;"></div>
<span class="t" style="left:284.70px;top:416px;font-size:12px;font-weight:700;color:#8b8886;letter-spacing:-0.006px;text-shadow:0 0 .35px #8b8886;">Cert. Empresa</span>
<div style="position:absolute;left:438px;top:421px;width:155px;height:33px;box-sizing:border-box;border:1px solid #ced4da;border-radius:9px;background:#f1f4f7;"></div>
<div style="position:absolute;left:444.00px;top:421.00px;width:92.00px;height:1.00px;background:#fff;"></div>
<span class="t" style="left:447.70px;top:416px;font-size:12px;font-weight:700;color:#8b8886;letter-spacing:0.000px;transform:scaleX(0.9781);transform-origin:0 0;text-shadow:0 0 .35px #8b8886;">Cert. Escritório</span>
<div style="position:absolute;left:606px;top:421px;width:324px;height:33px;box-sizing:border-box;border:1px solid #ced4da;border-radius:9px;background:#f1f4f7;"></div>
<div style="position:absolute;left:612.00px;top:421.00px;width:78.00px;height:1.00px;background:#fff;"></div>
<span class="t" style="left:615.70px;top:416px;font-size:12px;font-weight:700;color:#8b8886;letter-spacing:0.000px;transform:scaleX(0.9722);transform-origin:0 0;text-shadow:0 0 .35px #8b8886;">Id do Evento</span>
<div style="position:absolute;left:275px;top:470px;width:276px;height:33px;box-sizing:border-box;border:1px solid #ced4da;border-radius:9px;background:#f1f4f7;"></div>
<div style="position:absolute;left:281.00px;top:470.00px;width:109.00px;height:1.00px;background:#fff;"></div>
<span class="t" style="left:285.20px;top:465px;font-size:12px;font-weight:700;color:#8b8886;letter-spacing:0.052px;text-shadow:0 0 .35px #8b8886;">Tipo de Ambiente</span>
<span class="t" style="left:282.20px;top:482px;font-size:12.9px;font-weight:400;color:#444;letter-spacing:0.048px;">1. Produção</span>
<div class="ic" style="left:528.50px;top:483.20px;width:11.70px;height:7.40px;"><svg viewBox="0 0 12 7" preserveAspectRatio="none" ><path d="M0.8 0.8 L6 6 L11.2 0.8" fill="none" stroke="#4a4a4a" stroke-width="1.5" stroke-linecap="round" stroke-linejoin="round"/></svg></div>
<div style="position:absolute;left:564px;top:470px;width:366px;height:33px;box-sizing:border-box;border:1px solid #ced4da;border-radius:9px;background:#f1f4f7;"></div>
<div style="position:absolute;left:570.00px;top:470.00px;width:250.00px;height:1.00px;background:#fff;"></div>
<span class="t" style="left:573.50px;top:465px;font-size:12px;font-weight:700;color:#8b8886;letter-spacing:0.076px;text-shadow:0 0 .35px #8b8886;">Nº. Recibo (Resultado de Processamento)</span>
<svg class="ic" style="left:1048.5px;top:165.3px;width:12px;height:5px" viewBox="0 0 12 5"><path d="M0 5 L6 0 L12 5 Z" fill="#0c3162"/></svg>
<div style="position:absolute;left:964px;top:169px;width:180px;height:47px;background:#0c3162;border-radius:4px;"></div>
<span class="t" style="left:973.20px;top:176px;font-size:12.9px;font-weight:400;color:#fff;letter-spacing:0.000px;transform:scaleX(0.9488);transform-origin:0 0;text-shadow:0 0 .3px #fff;">Gerar uma tarefa de exclusão</span>
<span class="t" style="left:1008.00px;top:195px;font-size:12.9px;font-weight:400;color:#fff;letter-spacing:0.000px;transform:scaleX(0.9439);transform-origin:0 0;text-shadow:0 0 .3px #fff;">para este Evento</span>
<div class="ic" style="left:267.80px;top:698.20px;width:19.20px;height:19.80px;"><svg viewBox="0 0 19.2 19.8" preserveAspectRatio="none" ><path d="M1 4 Q1 1 4 1 H13.2 L18.2 6 V15.8 Q18.2 18.8 15.2 18.8 H4 Q1 18.8 1 15.8 Z" fill="none" stroke="#20c68a" stroke-width="1.9" stroke-linejoin="round"/><path d="M5.6 1 V4.4 Q5.6 5.6 6.8 5.6 H11.4 Q12.6 5.6 12.6 4.4 V1" fill="none" stroke="#20c68a" stroke-width="1.8"/><circle cx="9.6" cy="12.6" r="2.4" fill="none" stroke="#20c68a" stroke-width="1.8"/></svg></div>
<div class="ic" style="left:305.20px;top:697.40px;width:19.80px;height:19.80px;"><svg viewBox="0 0 19.8 19.8" preserveAspectRatio="none" ><circle cx="9.9" cy="9.9" r="8.9" fill="none" stroke="#1a7fe0" stroke-width="1.8"/><path d="M6.4 10.2 L9 12.6 L13.6 7.6" fill="none" stroke="#1a7fe0" stroke-width="1.8" stroke-linecap="round" stroke-linejoin="round"/></svg></div>
<div class="ic" style="left:342.00px;top:697.40px;width:20.00px;height:20.00px;"><svg viewBox="0 0 20 20" preserveAspectRatio="none" ><circle cx="10" cy="10" r="9" fill="none" stroke="#1e2a3a" stroke-width="1.8"/><path d="M10 6.5 V13.5 M6.5 10 H13.5" stroke="#1e2a3a" stroke-width="1.8" stroke-linecap="round" fill="none"/></svg></div>
<div class="ic" style="left:382.50px;top:697.70px;width:15.50px;height:19.10px;"><svg viewBox="0 0 15.5 19.1" preserveAspectRatio="none" ><path d="M0.9 4.2 H14.6 M5.2 3.9 V2.4 Q5.2 0.9 6.7 0.9 H8.8 Q10.3 0.9 10.3 2.4 V3.9" fill="none" stroke="#f77171" stroke-width="1.7" stroke-linecap="round"/><path d="M2.3 4.6 V15.2 Q2.3 18.1 5.2 18.1 H10.3 Q13.2 18.1 13.2 15.2 V4.6" fill="none" stroke="#f77171" stroke-width="1.7"/><path d="M6.2 8.4 V14 M9.4 8.4 V14" stroke="#f77171" stroke-width="1.7" stroke-linecap="round" fill="none"/></svg></div>
<div style="position:absolute;left:1482.90px;top:687.70px;width:39.50px;height:39.50px;box-sizing:border-box;border:1.5px solid #2f7cf0;border-radius:50% 50% 50% 0;background:#cfe9fd;overflow:hidden;"><svg viewBox="0 0 40 40" style="position:absolute;left:-1.5px;top:-1.5px;width:39.5px;height:39.5px"><path d="M6 40 C4 30 3.5 16 8 8 C12 1.5 24 -1 30 5 C35 10 35.5 24 33.5 40 Z" fill="#50352e"/><path d="M13.5 24 H23.5 V36 H13.5 Z" fill="#d9a58f"/><ellipse cx="17.8" cy="16.6" rx="9.2" ry="12.2" transform="rotate(-6 17.8 16.6)" fill="#e6b8a3"/><path d="M7.2 17 C6.6 7 13 2.6 19.5 2.8 C26.5 3 30 9 29.3 16.5 C27.4 9 23.4 4.6 18.6 4.4 C13 4.6 9.4 9 7.2 17 Z" fill="#50352e"/><path d="M26.8 9 C30 13 31.6 22 33.2 40 H27.4 C27.4 33 25.8 29 26.6 24 C27.4 19 28 14 26.8 9 Z" fill="#50352e"/><path d="M8.4 10 C5 17 5 29 6 40 H11.4 C9.4 31 8.2 22 9.4 14 Z" fill="#50352e"/><path d="M2 40 C4 35.6 8 33.6 13.6 32.2 L18.4 36.4 L23.6 32 C26.4 33 28.6 35.4 30 40 Z" fill="#e9e6e3"/><path d="M9.6 10.6 L14.6 9.8 M20.6 9.2 L25.4 8.9" stroke="#3b2a26" stroke-width="1.1" fill="none" stroke-linecap="round"/><g fill="rgba(150,160,180,.18)" stroke="#3c4150" stroke-width="1"><circle cx="12.6" cy="13.9" r="4"/><circle cx="23" cy="13.1" r="4"/></g><path d="M16.6 13.4 Q17.8 12.6 19 13.1" stroke="#3c4150" stroke-width="1" fill="none"/><path d="M14.2 20.2 Q18.8 21.4 23 19 Q21 24.2 17.6 23.6 Q15 23.2 14.2 20.2 Z" fill="#fff" stroke="#c44e4c" stroke-width="0.9" stroke-linejoin="round"/></svg></div>
<div style="position:absolute;left:0.00px;top:714.00px;width:373.00px;height:21.00px;background:#1f1f1f;border-radius:0 4px 0 0;"></div>
<span class="t" style="left:6.00px;top:719px;font-size:12.2px;font-weight:400;color:#fff;letter-spacing:0.000px;transform:scaleX(0.9452);transform-origin:0 0;">javascript:__doPostBack('ctl00$Conteudo$EditGeraEventoExclusao','')</span>
</body></html>
